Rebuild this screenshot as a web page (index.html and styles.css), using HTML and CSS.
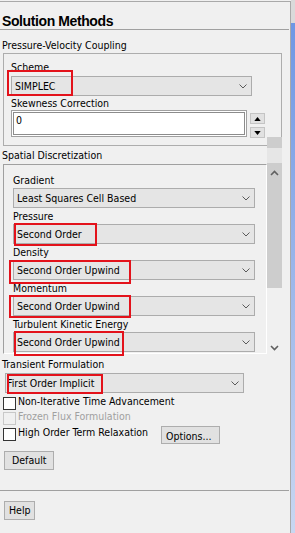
FILE: index.html
```html
<!DOCTYPE html>
<html lang="en">
  <head>
    <meta charset="UTF-8" />
    <title>Solution Methods</title>
    <link rel="stylesheet" href="styles.css">
  </head>
  <body>
    <div class="window">
      <div class="panel">
        <h1 class="title">Solution Methods</h1>

        <div class="section-label first">Pressure-Velocity Coupling</div>
        <div class="group">
          <div class="field-label">Scheme</div>
          <div class="combo combo-group">
            <span>SIMPLEC</span>
            <svg class="chev" width="8" height="5" viewBox="0 0 8 5"><polyline points="0.5,0.5 4,4 7.5,0.5" /></svg>
            <span class="mark mark-scheme"></span>
          </div>
          <div class="field-label skew">Skewness Correction</div>
          <div class="spin-row">
            <div class="text-field">0</div>
            <div class="spin">
              <div class="spin-btn"><svg width="8" height="5" viewBox="0 0 8 5"><polygon points="0,5 4,0 8,5" /></svg></div>
              <div class="spin-btn"><svg width="8" height="5" viewBox="0 0 8 5"><polygon points="0,0 8,0 4,5" /></svg></div>
            </div>
          </div>
        </div>

        <div class="disc">
          <div class="disc-main">
            <div class="section-label spatial">Spatial Discretization</div>
            <div class="scroll-box">
              <div class="field-label">Gradient</div>
              <div class="combo combo-inner">
                <span>Least Squares Cell Based</span>
                <svg class="chev" width="8" height="5" viewBox="0 0 8 5"><polyline points="0.5,0.5 4,4 7.5,0.5" /></svg>
              </div>
              <div class="field-label">Pressure</div>
              <div class="combo combo-inner">
                <span>Second Order</span>
                <svg class="chev" width="8" height="5" viewBox="0 0 8 5"><polyline points="0.5,0.5 4,4 7.5,0.5" /></svg>
                <span class="mark mark-pressure"></span>
              </div>
              <div class="field-label">Density</div>
              <div class="combo combo-inner">
                <span>Second Order Upwind</span>
                <svg class="chev" width="8" height="5" viewBox="0 0 8 5"><polyline points="0.5,0.5 4,4 7.5,0.5" /></svg>
                <span class="mark mark-density"></span>
              </div>
              <div class="field-label">Momentum</div>
              <div class="combo combo-inner">
                <span>Second Order Upwind</span>
                <svg class="chev" width="8" height="5" viewBox="0 0 8 5"><polyline points="0.5,0.5 4,4 7.5,0.5" /></svg>
                <span class="mark mark-momentum"></span>
              </div>
              <div class="field-label">Turbulent Kinetic Energy</div>
              <div class="combo combo-inner">
                <span>Second Order Upwind</span>
                <svg class="chev" width="8" height="5" viewBox="0 0 8 5"><polyline points="0.5,0.5 4,4 7.5,0.5" /></svg>
                <span class="mark mark-tke"></span>
              </div>
            </div>
          </div>
          <div class="vscroll">
            <div class="vs-cap"></div>
            <div class="vs-gap"></div>
            <div class="vs-thumb">
              <svg width="9" height="6" viewBox="0 0 9 6"><polyline points="1,5 4.5,1.5 8,5" /></svg>
            </div>
            <div class="vs-track">
              <svg width="9" height="6" viewBox="0 0 9 6"><polyline points="1,1 4.5,4.5 8,1" /></svg>
            </div>
          </div>
        </div>

        <div class="section-label transient">Transient Formulation</div>
        <div class="combo combo-transient">
          <span>First Order Implicit</span>
          <svg class="chev" width="8" height="5" viewBox="0 0 8 5"><polyline points="0.5,0.5 4,4 7.5,0.5" /></svg>
          <span class="mark mark-transient"></span>
        </div>

        <div class="check-row first-check">
          <span class="box"></span>
          <span class="check-text">Non-Iterative Time Advancement</span>
        </div>
        <div class="check-row disabled">
          <span class="box"></span>
          <span class="check-text">Frozen Flux Formulation</span>
        </div>
        <div class="check-row last-check">
          <span class="box"></span>
          <span class="check-text wide">High Order Term Relaxation</span>
          <div class="btn btn-options">Options...</div>
        </div>

        <div class="btn btn-default">Default</div>
        <div class="separator"></div>
        <div class="btn btn-help">Help</div>
      </div>
      <div class="outer-bar"></div>
    </div>
  </body>
</html>
```

FILE: styles.css
```css
body {
  margin: 0;
  background: #f0f0f0;
  font-family: "DejaVu Sans Condensed", "Liberation Sans", Arial, sans-serif;
  font-size: 10.5px;
  color: #000;
  overflow: hidden;
}
.window {
  display: flex;
  height: 533px;
}
.panel {
  width: 290px;
  margin-top: 1px;
  border-top: 1px solid #a9a9a9;
  border-right: 1px solid #a9a9a9;
}
.outer-bar {
  width: 4px;
  background: linear-gradient(to bottom, #dadada 0, #dadada 23px, #6f97e4 23px, #c9d7f1 100%);
}

.title {
  margin: 0 1px 0 0;
  padding: 11px 0 0 2px;
  font-family: "Liberation Sans", Arial, sans-serif;
  font-size: 14px;
  line-height: 16px;
  letter-spacing: -0.4px;
  font-weight: bold;
  border-bottom: 1px solid #a0a0a0;
}

.section-label {
  padding-left: 2px;
  line-height: 13px;
}
.section-label.first {
  margin-top: 9px;
}
.field-label {
  line-height: 13px;
  margin-bottom: 1px;
}

.group {
  margin: 1px 0 0 3px;
  width: 270px;
  border: 1px solid #adadad;
  padding: 7px 0 7px 7px;
}
.group .field-label {
  margin-bottom: 2px;
}
.group .field-label.skew {
  margin: 1px 0 0;
}

/* combo boxes */
.combo {
  position: relative;
  display: flex;
  align-items: center;
  justify-content: space-between;
  box-sizing: border-box;
  height: 20px;
  border: 1px solid #acacac;
  background: #e5e5e5;
  padding: 0 4px 0 3px;
  line-height: 18px;
  white-space: nowrap;
}
.chev polyline {
  fill: none;
  stroke: #5a5a5a;
  stroke-width: 1;
}
.combo-group {
  width: 241px;
}
.combo-inner {
  width: 242px;
  margin-bottom: 2px;
}
.combo-inner:last-child {
  margin-bottom: 0;
}
.combo-transient {
  width: 239px;
  margin: 2px 0 0 5px;
  padding-left: 1px;
}

/* red highlight frames */
.mark {
  position: absolute;
  box-sizing: border-box;
  border: 2px solid #e3121b;
}
.mark-scheme { left: -5px; top: -7px; width: 66px; height: 26px; }
.mark-pressure { left: 0; top: -2px; width: 83px; height: 23px; }
.mark-density { left: -5px; top: -1px; width: 122px; height: 24px; }
.mark-momentum { left: -5px; top: -2px; width: 122px; height: 23px; }
.mark-tke { left: 0; top: -2px; width: 110px; height: 25px; }
.mark-transient { left: 1px; top: 0; width: 96px; height: 20px; }

/* skewness spinner */
.spin-row {
  display: flex;
}
.text-field {
  box-sizing: border-box;
  width: 236px;
  height: 27px;
  border: 1px solid #a0a0a0;
  box-shadow: inset 0 0 0 1px #fff, inset 0 0 0 2px #8c8c8c;
  background: #fff;
  padding: 3px 4px;
  line-height: 13px;
}
.spin {
  display: flex;
  flex-direction: column;
  margin: 3px 0 0 3px;
  gap: 3px;
}
.spin-btn {
  box-sizing: border-box;
  width: 15px;
  height: 11px;
  border: 1px solid #c4c4c4;
  background: #e1e1e1;
  display: flex;
  align-items: center;
  justify-content: center;
}
.spin-btn svg {
  width: 7px;
  height: 4px;
}
.spin-btn polygon {
  fill: #000;
}

/* spatial discretization */
.disc {
  display: flex;
}
.disc-main {
  width: 266px;
}
.section-label.spatial {
  margin-top: 3px;
}
.scroll-box {
  margin: 2px 0 0 3px;
  width: 253px;
  border-top: 1px solid #a0a0a0;
  border-left: 1px solid #a0a0a0;
  border-bottom: 1px solid #fff;
  border-right: 1px solid #fff;
  padding: 9px 0 1px 9px;
}
.vscroll {
  width: 15px;
  margin: -9px 0 0 1px;
  height: 218px;
  display: flex;
  flex-direction: column;
}
.vscroll polyline {
  fill: none;
  stroke: #606060;
  stroke-width: 1.6;
}
.vs-cap {
  height: 11px;
  background: #cdcdcd;
}
.vs-gap {
  height: 15px;
  background: #e6e6e6;
}
.vs-thumb {
  height: 125px;
  background: #cdcdcd;
  display: flex;
  justify-content: center;
  padding-top: 7px;
  box-sizing: border-box;
}
.vs-track {
  flex: 1;
  display: flex;
  justify-content: center;
  padding-top: 57px;
}

/* transient formulation */
.section-label.transient {
  margin-top: 3px;
}

.check-row {
  display: flex;
  align-items: flex-start;
  padding-left: 3px;
  line-height: 13px;
}
.check-row.first-check {
  margin-top: 2px;
}
.check-row.disabled {
  color: #a0a0a0;
}
.check-row.last-check {
  margin-top: 1px;
}
.box {
  width: 11px;
  height: 11px;
  border: 1px solid #333;
  background: #fff;
  margin: 2px 2px 0 0;
  flex: none;
}
.disabled .box {
  border-color: #c8c8c8;
  background: #f0f0f0;
}
.check-text.wide {
  width: 143px;
}

.btn {
  box-sizing: border-box;
  border: 1px solid #adadad;
  background: #e1e1e1;
  line-height: 13px;
  white-space: nowrap;
}
.btn-options {
  width: 59px;
  height: 18px;
  padding: 3px 0 0 4px;
}
.btn-default {
  width: 50px;
  height: 19px;
  margin: 7px 0 0 4px;
  padding: 2px 0 0 7px;
}
.separator {
  margin: 20px 1px 0 0;
  border-top: 1px solid #a0a0a0;
}
.btn-help {
  width: 31px;
  height: 19px;
  margin: 10px 0 0 4px;
  padding: 2px 0 0 4px;
}
```
